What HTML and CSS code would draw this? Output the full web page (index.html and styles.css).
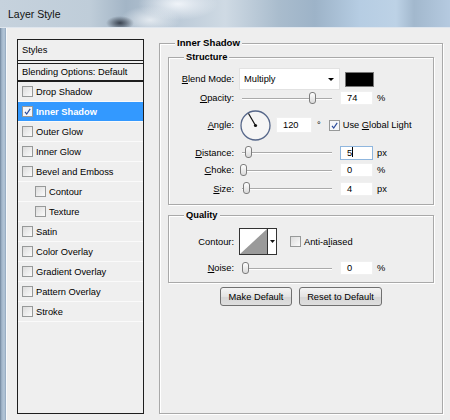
FILE: index.html
```html
<!DOCTYPE html>
<html lang="en">
  <head>
    <meta charset="UTF-8" />
    <title>Layer Style</title>
    <link rel="stylesheet" href="styles.css">
  </head>
  <body>
    <div class="window">
      <div class="titlebar"><span class="title">Layer Style</span></div>
      <div class="frame">
        <div class="edge"></div>
        <div class="content">
          <!-- 왼쪽 스타일 목록 -->
          <div class="styles-list">
            <div class="list-head">Styles</div>
            <div class="list-blend">Blending Options: Default</div>
            <div class="item"><span class="check"></span>Drop Shadow</div>
            <div class="item selected">
              <span class="check on">
                <svg width="9" height="9" viewBox="0 0 9 9"><polyline points="2,4.8 3.7,7 7.2,1.8" fill="none" stroke="#2b4c9c" stroke-width="1.2" /></svg>
              </span>Inner Shadow
            </div>
            <div class="item"><span class="check"></span>Outer Glow</div>
            <div class="item"><span class="check"></span>Inner Glow</div>
            <div class="item"><span class="check"></span>Bevel and Emboss</div>
            <div class="item sub"><span class="check"></span>Contour</div>
            <div class="item sub"><span class="check"></span>Texture</div>
            <div class="item"><span class="check"></span>Satin</div>
            <div class="item"><span class="check"></span>Color Overlay</div>
            <div class="item"><span class="check"></span>Gradient Overlay</div>
            <div class="item"><span class="check"></span>Pattern Overlay</div>
            <div class="item"><span class="check"></span>Stroke</div>
          </div>

          <!-- 오른쪽 설정 영역 -->
          <fieldset class="panel">
            <legend>Inner Shadow</legend>

            <fieldset class="group structure">
              <legend>Structure</legend>
              <div class="row blend-row">
                <span class="label"><u>B</u>lend Mode:</span>
                <span class="select">Multiply<span class="arrow"></span></span>
                <span class="swatch"></span>
              </div>
              <div class="row opacity-row">
                <span class="label"><u>O</u>pacity:</span>
                <span class="slider"><span class="thumb" style="left: 67px"></span></span>
                <span class="num">74</span>
                <span class="unit">%</span>
              </div>
              <div class="row angle-row">
                <span class="label"><u>A</u>ngle:</span>
                <svg class="dial" width="31" height="31" viewBox="0 0 31 31">
                  <circle cx="15.5" cy="15.5" r="14.5" fill="#f5f5f5" stroke="#56678a" stroke-width="1.3" />
                  <line x1="15.5" y1="15.5" x2="8.5" y2="3.5" stroke="#111" stroke-width="1.2" />
                  <circle cx="15.5" cy="15.5" r="1.6" fill="#111" />
                </svg>
                <span class="num wide">120</span>
                <span class="deg">°</span>
                <span class="check on global">
                  <svg width="9" height="9" viewBox="0 0 9 9"><polyline points="2,4.8 3.7,7 7.2,1.8" fill="none" stroke="#2b4c9c" stroke-width="1.2" /></svg>
                </span>
                <span class="check-label">Use <u>G</u>lobal Light</span>
              </div>
              <div class="row dist-row">
                <span class="label"><u>D</u>istance:</span>
                <span class="slider"><span class="thumb" style="left: 3px"></span></span>
                <span class="num focus">5<span class="caret"></span></span>
                <span class="unit">px</span>
              </div>
              <div class="row choke-row">
                <span class="label"><u>C</u>hoke:</span>
                <span class="slider"><span class="thumb" style="left: -2px"></span></span>
                <span class="num">0</span>
                <span class="unit">%</span>
              </div>
              <div class="row size-row">
                <span class="label"><u>S</u>ize:</span>
                <span class="slider"><span class="thumb" style="left: 1px"></span></span>
                <span class="num">4</span>
                <span class="unit">px</span>
              </div>
            </fieldset>

            <fieldset class="group quality">
              <legend>Quality</legend>
              <div class="row contour-row">
                <span class="label">Contour:</span>
                <svg class="contour" width="38" height="27" viewBox="0 0 38 27">
                  <rect x="0.5" y="0.5" width="37" height="26" fill="#fff" stroke="#333" />
                  <polygon points="1,26 28,1 28,26" fill="#9a9a9a" />
                  <line x1="28.5" y1="0.5" x2="28.5" y2="26.5" stroke="#333" />
                  <polygon points="31,12 36,12 33.5,15" fill="#111" />
                </svg>
                <span class="check aa"></span>
                <span class="check-label">Anti-a<u>l</u>iased</span>
              </div>
              <div class="row noise-row">
                <span class="label"><u>N</u>oise:</span>
                <span class="slider"><span class="thumb" style="left: 0px"></span></span>
                <span class="num">0</span>
                <span class="unit">%</span>
              </div>
            </fieldset>

            <div class="buttons">
              <button class="btn make">Make Default</button>
              <button class="btn reset">Reset to Default</button>
            </div>
          </fieldset>
        </div>
      </div>
    </div>
  </body>
</html>
```

FILE: styles.css
```css
body {
  margin: 0;
  width: 450px;
  height: 420px;
  overflow: hidden;
  background-color: #eeeeee;
  font-family: "Liberation Sans", Arial, sans-serif;
  font-size: 9.3px;
  color: #000;
}

.window {
  display: flex;
  flex-direction: column;
  height: 420px;
}

/* 제목 표시줄 */
.titlebar {
  height: 27px;
  flex: none;
  background:
    radial-gradient(ellipse 14px 7px at 120px 23px, #3a4350 0%, rgba(58, 67, 80, 0) 100%),
    radial-gradient(ellipse 40px 16px at 178px 4px, rgba(245, 248, 252, 0.9) 0%, rgba(245, 248, 252, 0) 100%),
    radial-gradient(ellipse 30px 14px at 150px 20px, rgba(240, 244, 248, 0.8) 0%, rgba(240, 244, 248, 0) 100%),
    linear-gradient(90deg, #c6d2dd 0%, #bfcdd9 20%, #a3b5c6 28%, #b9c8d6 38%, #cfdae4 50%, #a9bccd 62%, #9db3c8 70%, #b6cde3 80%, #bdd2e6 88%, #a2b8cd 92%, #b5cae0 100%);
  border-bottom: 1px solid #dfe6ee;
}

.title {
  display: block;
  padding-left: 8px;
  line-height: 28px;
  font-size: 10.5px;
  color: #111;
}

.frame {
  display: flex;
  flex: 1;
}

.edge {
  width: 6px;
  flex: none;
  background: linear-gradient(90deg, #6f849b 0%, #a2b6ca 30%, #b4c6d8 70%, #8fa5bc 100%);
  border-right: 1px solid #f7f9fb;
}

.content {
  flex: 1;
  display: flex;
  align-items: flex-start;
  gap: 15px;
  padding: 11px 0 0 10px;
  background-color: #eeeeee;
}

/* 스타일 목록 */
.styles-list {
  width: 127px;
  height: 375px;
  box-sizing: border-box;
  border: 1px solid #1e1e1e;
  background-color: #efefef;
  flex: none;
}

.list-head {
  height: 20px;
  line-height: 20px;
  padding-left: 4px;
  border-bottom: 1px solid #1e1e1e;
}

.list-blend {
  height: 16px;
  line-height: 16px;
  margin-top: 2px;
  padding-left: 4px;
  border-top: 1px solid #1e1e1e;
  border-bottom: 2px solid #1e1e1e;
}

.item {
  display: flex;
  align-items: center;
  height: 19px;
  padding-left: 4px;
  border-bottom: 1px solid #fafafa;
}

.item.sub {
  padding-left: 17px;
}

.item.selected {
  background-color: #3399ff;
  color: #fff;
  font-weight: bold;
}

.check {
  display: inline-flex;
  align-items: center;
  justify-content: center;
  width: 11px;
  height: 11px;
  box-sizing: border-box;
  border: 1px solid #979999;
  background: linear-gradient(135deg, #dcdcdc, #fbfbfb);
  margin-right: 3px;
  flex: none;
}

.check.on {
  background: #f4f6fa;
}

/* 오른쪽 패널 */
fieldset {
  margin: 0;
  box-sizing: border-box;
  border: 1px solid #a9a9a9;
  box-shadow: inset 1px 1px #fff, 1px 1px #fff;
}

legend {
  font-weight: bold;
  line-height: 12px;
  padding: 0 2px;
  margin-left: 15px;
  background-color: #eeeeee;
}

.panel {
  width: 284px;
  height: 377px;
  margin-top: -2px;
  padding: 2px 8px 0 8px;
}

.panel > legend {
  font-size: 9.6px;
  margin-left: 7px;
}

.group {
  padding: 5px 0 6px 0;
}

.group.quality {
  margin-top: 4px;
  padding: 7px 0 7px 0;
}

.row {
  display: flex;
  align-items: center;
}

.label {
  width: 65px;
  margin-right: 5px;
  text-align: right;
  flex: none;
}

.blend-row { height: 22px; }
.opacity-row { height: 16px; }
.angle-row { height: 38px; }
.dist-row { height: 17px; }
.choke-row { height: 18px; }
.size-row { height: 19px; }

.select {
  position: relative;
  width: 101px;
  height: 22px;
  box-sizing: border-box;
  line-height: 20px;
  padding-left: 4px;
  background-color: #fff;
  border: 1px solid #e2e2e2;
}

.select .arrow {
  position: absolute;
  right: 5px;
  top: 9px;
  border-left: 3px solid transparent;
  border-right: 3px solid transparent;
  border-top: 3px solid #000;
}

.swatch {
  width: 29px;
  height: 15px;
  box-sizing: border-box;
  margin-left: 5px;
  background-color: #000;
  border: 1px solid #777;
}

.slider {
  position: relative;
  width: 90px;
  height: 1px;
  margin: 0 8px 0 3px;
  background-color: #aaaaaa;
  box-shadow: 0 1px #fff;
  flex: none;
}

.thumb {
  position: absolute;
  top: -6px;
  width: 7px;
  height: 12px;
  box-sizing: border-box;
  border: 1px solid #7d7d7d;
  border-radius: 3px;
  background: linear-gradient(#ffffff, #dadada);
}

.num {
  position: relative;
  width: 33px;
  height: 14px;
  box-sizing: border-box;
  line-height: 13px;
  padding-left: 6px;
  background-color: #fff;
  border: 1px solid #f0f0f0;
  flex: none;
}

.num.wide {
  width: 36px;
  height: 16px;
  line-height: 15px;
  margin-left: 5px;
}

.num.focus {
  border-color: #8fb6de;
}

.caret {
  display: inline-block;
  width: 1px;
  height: 10px;
  background-color: #000;
  vertical-align: -1px;
}

.unit {
  margin-left: 4px;
}

.dial {
  margin-left: 1px;
  flex: none;
}

.deg {
  margin-left: 5px;
}

.check.global {
  margin-left: 8px;
}

.contour {
  flex: none;
}

.contour-row { height: 27px; }

.noise-row {
  height: 14px;
  margin-top: 6px;
}

.check.aa {
  margin-left: 13px;
}

/* 버튼 */
.buttons {
  display: flex;
  justify-content: center;
  gap: 7px;
  margin-top: 4px;
}

.btn {
  height: 19px;
  padding: 0;
  font-family: inherit;
  font-size: 9.3px;
  color: #000;
  border: 1px solid #707070;
  border-radius: 3px;
  background: linear-gradient(#f4f4f4, #e4e4e4 50%, #d6d6d6 51%, #dedede);
}

.btn.make { width: 72px; }
.btn.reset { width: 83px; }
```
